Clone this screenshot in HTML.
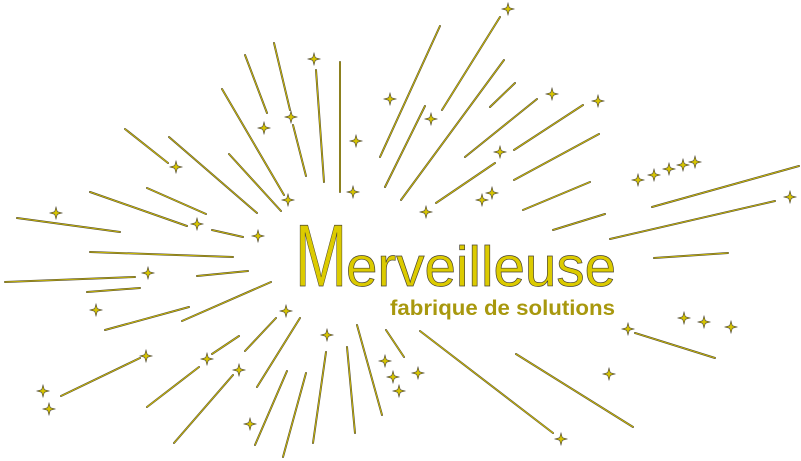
<!DOCTYPE html>
<html><head><meta charset="utf-8"><style>
html,body{margin:0;padding:0;background:#fff;width:801px;height:461px;overflow:hidden}
svg{display:block}
</style></head><body>
<svg width="801" height="461" viewBox="0 0 801 461" xmlns="http://www.w3.org/2000/svg">
<defs>
<path id="s" d="M0,-6 L1.3,-1.3 L6,0 L1.3,1.3 L0,6 L-1.3,1.3 L-6,0 L-1.3,-1.3Z" fill="#d8c600" stroke="#4a4430" stroke-width="0.6"/>
<path id="r" d="M440,26L380,157M500,17L442,110M504,60L401,200M425,106L385,187M515,83L490,107M537,99L465,157M583,105L514,150M495,163L436,203M599,134L514,180M590,182L523,210M605,214L553,230M799,166L652,207M775,201L610,239M728,253L654,258M635,333L715,358M516,354L633,427M420,331L553,433M386,330L404,357
M90,252L233,257M5,282L135,277M197,276L248,271M87,292L140,288M105,330L189,307M182,321L271,282M61,396L140,358M147,407L199,367M212,354L239,336M245,351L276,318M257,387L300,318M174,443L233,375M255,445L287,371M283,457L306,373M313,443L326,352M347,347L355,433M357,325L382,415
M17,218L120,232M147,188L206,214M90,192L187,226M125,129L168,163M169,137L257,213M229,154L281,211M222,89L284,195M245,55L267,113M274,43L290,110M293,125L306,176M316,70L324,182M340,62L340,192M212,230L243,237"/>
</defs>
<g stroke-linecap="round" fill="none">
<use href="#r" stroke="#5a5232" stroke-width="2"/>
<use href="#r" stroke="#d8c600" stroke-width="0.8"/>
</g>
<g>
<use href="#s" x="508" y="9"/><use href="#s" x="390" y="99"/><use href="#s" x="431" y="119"/><use href="#s" x="552" y="94"/><use href="#s" x="598" y="101"/><use href="#s" x="500" y="152"/><use href="#s" x="482" y="200"/><use href="#s" x="492" y="193"/><use href="#s" x="426" y="212"/><use href="#s" x="638" y="180"/><use href="#s" x="654" y="175"/><use href="#s" x="669" y="169"/><use href="#s" x="683" y="165"/><use href="#s" x="695" y="162"/><use href="#s" x="790" y="197"/><use href="#s" x="628" y="329"/><use href="#s" x="684" y="318"/><use href="#s" x="704" y="322"/><use href="#s" x="731" y="327"/><use href="#s" x="385" y="361"/><use href="#s" x="393" y="377"/><use href="#s" x="399" y="391"/><use href="#s" x="418" y="373"/><use href="#s" x="609" y="374"/><use href="#s" x="561" y="439"/>
<use href="#s" x="258" y="236"/><use href="#s" x="148" y="273"/><use href="#s" x="96" y="310"/><use href="#s" x="286" y="311"/><use href="#s" x="327" y="335"/><use href="#s" x="146" y="356"/><use href="#s" x="207" y="359"/><use href="#s" x="239" y="370"/><use href="#s" x="43" y="391"/><use href="#s" x="49" y="409"/><use href="#s" x="250" y="424"/>
<use href="#s" x="314" y="59"/><use href="#s" x="291" y="117"/><use href="#s" x="264" y="128"/><use href="#s" x="356" y="141"/><use href="#s" x="176" y="167"/><use href="#s" x="353" y="192"/><use href="#s" x="288" y="200"/><use href="#s" x="56" y="213"/><use href="#s" x="197" y="224"/>
</g>
<g font-family="Liberation Sans, sans-serif" fill="#dccb00" stroke="#4a4430" stroke-width="0.7">
<text x="295" y="286" font-size="88" textLength="52" lengthAdjust="spacingAndGlyphs">M</text>
<text x="346" y="286" font-size="57" textLength="270" lengthAdjust="spacingAndGlyphs">erveilleuse</text>
</g>
<text x="390" y="315" font-family="Liberation Sans, sans-serif" font-weight="bold" font-size="21" fill="#a8980e" textLength="225" lengthAdjust="spacingAndGlyphs">fabrique de solutions</text>
</svg>
</body></html>
